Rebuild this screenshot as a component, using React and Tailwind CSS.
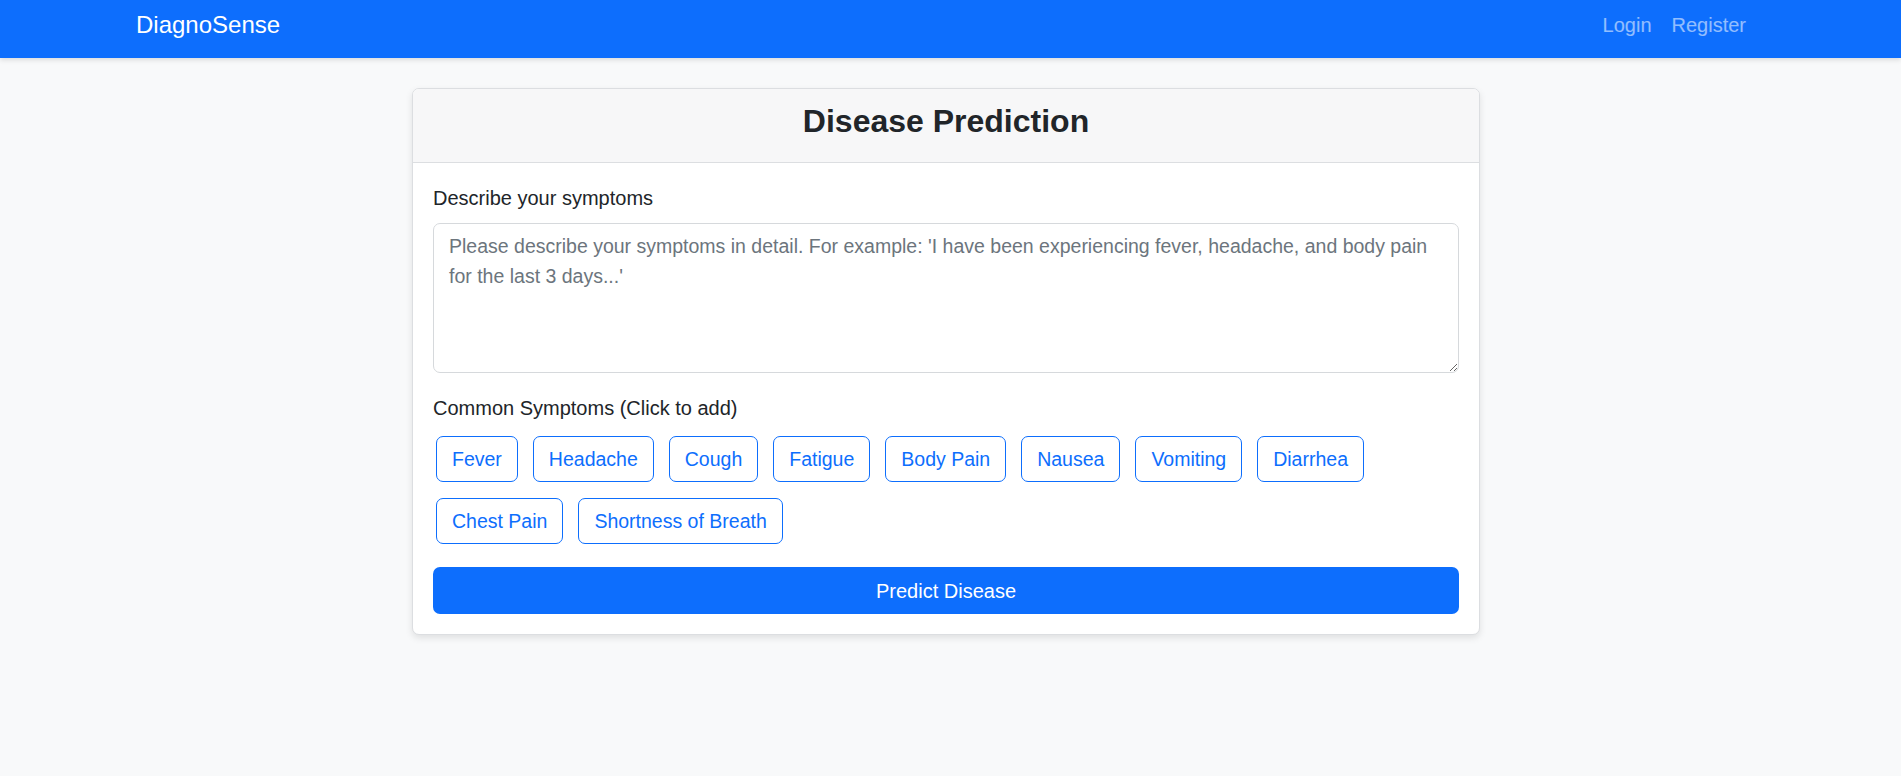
import React from "react";

const chips = [
  "Fever",
  "Headache",
  "Cough",
  "Fatigue",
  "Body Pain",
  "Nausea",
  "Vomiting",
  "Diarrhea",
  "Chest Pain",
  "Shortness of Breath",
];

export default function App() {
  return (
    <div className="min-h-[776px] bg-[#f8f9fa] text-[#212529] font-['Liberation_Sans',Arial,sans-serif]">
      <nav className="h-[58px] bg-[#0d6efd] shadow-[0_2px_5px_rgba(0,0,0,0.12)] pr-[9px]">
        <div className="mx-auto w-[1620px] h-full flex items-center justify-between pb-[9px]">
          <a className="text-white text-[24px] leading-[36px]">DiagnoSense</a>
          <div className="flex items-center">
            <a className="px-[10px] text-[20px] leading-[30px] text-white/55">Login</a>
            <a className="px-[10px] text-[20px] leading-[30px] text-white/55">Register</a>
          </div>
        </div>
      </nav>
      <div className="pr-[9px] pt-[30px]">
        <div className="mx-auto w-[1068px] bg-white border border-[#dcdee1] rounded-[7px] shadow-[0_3px_7px_rgba(0,0,0,0.1)] overflow-hidden">
          <div className="bg-[#f7f7f8] border-b border-[#dcdee1] px-[20px] pt-[11px] pb-[20px] text-center">
            <h3 className="text-[32px] leading-[42px] font-bold">Disease Prediction</h3>
          </div>
          <div className="p-[20px]">
            <label className="block text-[20px] leading-[30px] mb-[10px]">Describe your symptoms</label>
            <textarea
              className="block w-full h-[150px] border border-[#d6d9dc] rounded-[7px] px-[15px] py-[7px] text-[19.5px] leading-[30px] placeholder:text-[#6c757d] outline-none"
              placeholder="Please describe your symptoms in detail. For example: 'I have been experiencing fever, headache, and body pain for the last 3 days...'"
            />
            <div className="mt-[20px] text-[20px] leading-[30px]">Common Symptoms (Click to add)</div>
            <div className="flex flex-wrap gap-x-[15px] gap-y-[16px] pl-[3px] mt-[13px]">
              {chips.map((c) => (
                <button
                  key={c}
                  className="h-[46px] px-[15px] border border-[#0d6efd] rounded-[7px] text-[#0d6efd] text-[19.5px] leading-[30px]"
                >
                  {c}
                </button>
              ))}
            </div>
            <button className="mt-[23px] w-full h-[47px] bg-[#0d6efd] text-white rounded-[7px] text-[20px] leading-[30px]">
              Predict Disease
            </button>
          </div>
        </div>
      </div>
    </div>
  );
}
